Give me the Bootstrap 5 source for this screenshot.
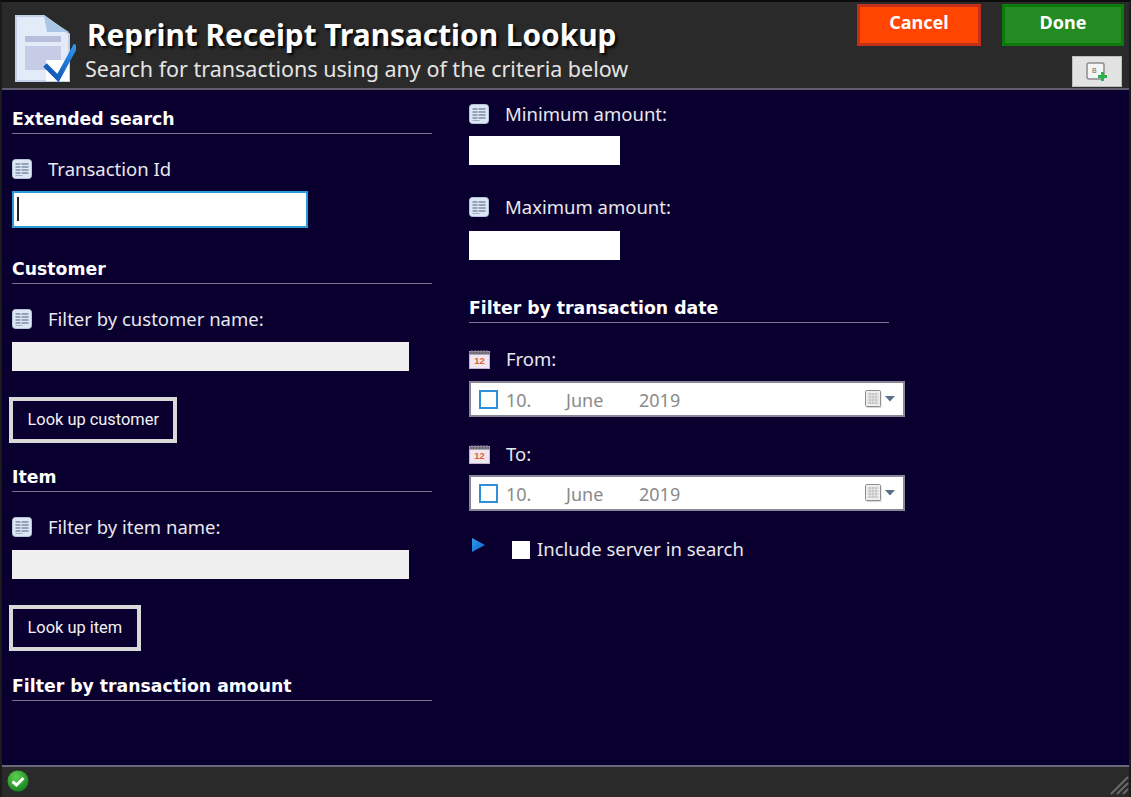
<!DOCTYPE html>
<html lang="en">
<head>
<meta charset="utf-8">
<title>Reprint Receipt Transaction Lookup</title>
<link href="https://cdn.jsdelivr.net/npm/bootstrap@5.3.0/dist/css/bootstrap.min.css" rel="stylesheet">
<style>
html, body { height: 100%; }
body { background: #2a2a2a; color: #fff; font-family: "Noto Sans", "DejaVu Sans", sans-serif; overflow: hidden; }
.shell { width: 1131px; height: 797px; border-top: 2px solid #0c0c0c; border-left: 2px solid #1c1c1c; border-right: 2px solid #1c1c1c; }
.top-bar { height: 88px; background: #2a2a2a; border-bottom: 2px solid #5f5c70; }
.doc-icon { width: 62px; height: 70px; margin: 13px 0 0 12px; flex: none; }
.title-box { margin-left: 11px; padding-top: 15px; }
.title-main { font-size: 29.8px; line-height: 36px; font-weight: 700; text-shadow: 2px 2px 3px #000; white-space: nowrap; }
.title-sub { font-size: 21.5px; line-height: 20px; color: #e4e4e4; white-space: nowrap; margin: 6px 0 0 -2px; }
.top-actions { width: 272px; padding-right: 5px; }
.act-btn { height: 42px; margin-top: 2px; font-size: 18px; font-weight: 700; color: #fff; border: 3px solid; border-radius: 0; padding: 0 0 6px; line-height: 1; }
.act-cancel { width: 124px; background: #ff4500; border-color: #c3301a; }
.act-done { width: 122px; background: #228b22; border-color: #0b7a0b; }
.key-btn { width: 50px; height: 31px; background: #e2e2e2; border: 1px solid #bdbdbd; border-radius: 0; padding: 0; margin: 10px 2px 0 0; }
.work-area { height: 675px; background: #0a0030; }
.col-left { width: 467px; padding: 0 0 0 10px; flex: none; }
.col-right { width: 436px; flex: none; }
.sec-head { font-family: "DejaVu Sans", sans-serif; font-size: 17.3px; line-height: 22px; font-weight: 700; border-bottom: 1px solid #77758a; padding-bottom: 3px; margin: 0; white-space: nowrap; width: 420px; }
.fld-label { font-size: 18.5px; line-height: 22px; color: #e8e8ee; margin: 0; white-space: nowrap; }
.fld-icon { width: 20px; height: 20px; flex: none; }
.cal-icon { width: 21px; height: 20px; flex: none; }
.txt-box { display: block; background: #fff; border: 0; border-radius: 0; padding: 0; height: 29px; }
.box-id { width: 296px; height: 37px; border: 2px solid #2b9bd6; margin-top: 11px; position: relative; }
.box-id::before { content: ""; position: absolute; left: 3px; top: 4px; bottom: 5px; width: 2px; background: #222; }
.box-wide { width: 397px; background: #efefef; margin-top: 12px; }
.box-amt { width: 151px; margin-top: 11px; }
.box-amt2 { margin-top: 13px; }
.outline-btn { display: block; height: 46px; margin: 26px 0 0 -3px; background: transparent; border: 4px solid #d9d9d9; border-radius: 0; color: #f2f2f2; font-family: "Roboto", "Liberation Sans", sans-serif; font-size: 16.4px; padding: 0 14.5px; }
.date-box { width: 436px; height: 36px; background: #fff; border: 2px solid #8a8898; margin-top: 11px; color: #8a8a8a; font-size: 18px; padding: 0 8px; }
.date-box2 { margin-top: 10px; }
.date-check { width: 19px; height: 19px; border: 2px solid #2f8fd8; flex: none; margin-right: 8px; }
.date-day { width: 60px; }
.date-month { width: 73px; }
.date-txt { padding-top: 2px; }
.inc-check { width: 18px; height: 18px; background: #fff; flex: none; margin: 4px 7px 0 26px; }
.inc-tri { width: 15px; height: 16px; flex: none; margin: -6px 0 0 2px; }
.bottom-bar { height: 30px; border-top: 2px solid #6a687a; background: #2a2a2a; padding-left: 5px; }
.grip { width: 22px; height: 22px; margin-top: auto; }
</style>
</head>
<body>
<svg width="0" height="0" class="position-absolute">
  <defs>
    <linearGradient id="chk-grad" x1="0" y1="1" x2="1" y2="0">
      <stop offset="0" stop-color="#0f4fb0"/><stop offset="1" stop-color="#2f96ee"/>
    </linearGradient>
    <radialGradient id="ok-grad" cx=".4" cy=".3" r=".8">
      <stop offset="0" stop-color="#5ed04f"/><stop offset="1" stop-color="#0e7a1c"/>
    </radialGradient>
    <linearGradient id="tri-grad" x1="0" y1="0" x2="1" y2="1">
      <stop offset="0" stop-color="#2f9cf0"/><stop offset="1" stop-color="#0f5fc4"/>
    </linearGradient>
    <symbol id="list-ico" viewBox="0 0 20 20">
      <rect x="0.5" y="0.5" width="19" height="19" rx="3" fill="#dde7f3" stroke="#b6c6da"/>
      <path d="M3.5 5h13M3.5 8h13M3.5 11h13M3.5 14h13" stroke="#7b8ea8" stroke-width="1.3"/>
      <path d="M9 4v11" stroke="#dde7f3" stroke-width="1"/>
      <path d="M3.5 16.5h7" stroke="#9fb0c6" stroke-width="1"/>
    </symbol>
    <symbol id="cal-ico" viewBox="0 0 21 20">
      <rect x="0.5" y="2.5" width="20" height="17" fill="#efe6f2" stroke="#bdb6c8"/>
      <rect x="0.5" y="2.5" width="20" height="3" fill="#6a6470"/>
      <path d="M3 1v4M6 1v4M9 1v4M12 1v4M15 1v4M18 1v4" stroke="#8d8894" stroke-width="1"/>
      <text x="10.5" y="15" text-anchor="middle" font-size="9.5" font-weight="700" fill="#e8602c" font-family="Liberation Sans">12</text>
    </symbol>
    <symbol id="pick-ico" viewBox="0 0 30 18">
      <rect x="1.5" y="2" width="15" height="16" fill="#8f8f8f" opacity=".35"/>
      <rect x="0.5" y="0.5" width="15" height="16" rx="1" fill="#eee" stroke="#8e8e8e"/>
      <path d="M2.5 4h11M2.5 7h11M2.5 10h11M2.5 13h11M5 3v11M8 3v11M11 3v11" stroke="#b4b4b4" stroke-width=".8"/>
      <path d="M20 6h10l-5 5.5z" fill="#5c6f8a"/>
    </symbol>
  </defs>
</svg>
<div class="shell d-flex flex-column">
  <div class="top-bar d-flex">
    <svg class="doc-icon" viewBox="0 0 62 70">
      <path d="M2 1h28l25 18v47H2z" fill="#e4ebf8" stroke="#c4cfe8" stroke-width="2"/>
      <path d="M30 1l3 16h22z" fill="#a9c6e6"/>
      <rect x="11" y="21" width="36" height="6" fill="#b7bfdd"/>
      <rect x="11" y="31" width="36" height="24" fill="#c6cce6"/>
      <rect x="32" y="45" width="23" height="21" fill="#fff"/>
      <path d="M31 50l13 13 18-33" fill="none" stroke="url(#chk-grad)" stroke-width="5"/>
    </svg>
    <div class="title-box flex-grow-1">
      <div class="title-main">Reprint Receipt Transaction Lookup</div>
      <div class="title-sub">Search for transactions using any of the criteria below</div>
    </div>
    <div class="top-actions d-flex flex-column align-items-end flex-none">
      <div class="d-flex w-100 justify-content-between">
        <button class="btn act-btn act-cancel">Cancel</button>
        <button class="btn act-btn act-done">Done</button>
      </div>
      <button class="btn key-btn d-flex align-items-center justify-content-center">
        <svg width="24" height="22" viewBox="0 0 24 22">
          <rect x="2" y="2" width="17" height="16" rx="2" fill="#f4f4f4" stroke="#8c8c8c" stroke-width="1.5"/>
          <text x="7" y="12" font-size="7" fill="#666" font-family="Liberation Sans">B</text>
          <path d="M16 11h3v3h3v3h-3v3h-3v-3h-3v-3h3z" fill="#2cb24a"/>
        </svg>
      </button>
    </div>
  </div>

  <div class="work-area d-flex">
    <div class="col-left">
      <h2 class="sec-head" style="margin-top:18px">Extended search</h2>
      <div class="d-flex align-items-center gap-3 mt-4"><svg class="fld-icon"><use href="#list-ico"/></svg><p class="fld-label">Transaction Id</p></div>
      <div class="txt-box box-id"></div>
      <h2 class="sec-head" style="margin-top:30px">Customer</h2>
      <div class="d-flex align-items-center gap-3 mt-4"><svg class="fld-icon"><use href="#list-ico"/></svg><p class="fld-label">Filter by customer name:</p></div>
      <div class="txt-box box-wide"></div>
      <button class="outline-btn">Look up customer</button>
      <h2 class="sec-head" style="margin-top:23px">Item</h2>
      <div class="d-flex align-items-center gap-3 mt-4"><svg class="fld-icon"><use href="#list-ico"/></svg><p class="fld-label">Filter by item name:</p></div>
      <div class="txt-box box-wide"></div>
      <button class="outline-btn">Look up item</button>
      <h2 class="sec-head" style="margin-top:24px">Filter by transaction amount</h2>
    </div>
    <div class="col-right">
      <div class="d-flex align-items-center gap-3" style="margin-top:13px"><svg class="fld-icon"><use href="#list-ico"/></svg><p class="fld-label">Minimum amount:</p></div>
      <div class="txt-box box-amt"></div>
      <div class="d-flex align-items-center gap-3" style="margin-top:31px"><svg class="fld-icon"><use href="#list-ico"/></svg><p class="fld-label">Maximum amount:</p></div>
      <div class="txt-box box-amt box-amt2"></div>
      <h2 class="sec-head" style="margin-top:37px">Filter by transaction date</h2>
      <div class="d-flex align-items-center gap-3" style="margin-top:25px"><svg class="cal-icon"><use href="#cal-ico"/></svg><p class="fld-label">From:</p></div>
      <div class="date-box d-flex align-items-center">
        <span class="date-check"></span><span class="date-day date-txt">10.</span><span class="date-month date-txt">June</span><span class="flex-grow-1 date-txt">2019</span>
        <svg width="30" height="18"><use href="#pick-ico"/></svg>
      </div>
      <div class="d-flex align-items-center gap-3" style="margin-top:26px"><svg class="cal-icon"><use href="#cal-ico"/></svg><p class="fld-label">To:</p></div>
      <div class="date-box date-box2 d-flex align-items-center">
        <span class="date-check"></span><span class="date-day date-txt">10.</span><span class="date-month date-txt">June</span><span class="flex-grow-1 date-txt">2019</span>
        <svg width="30" height="18"><use href="#pick-ico"/></svg>
      </div>
      <div class="d-flex align-items-center" style="margin-top:25px">
        <svg class="inc-tri" viewBox="0 0 15 16"><path d="M1 1l13 7-13 7z" fill="url(#tri-grad)"/></svg>
        <span class="inc-check"></span>
        <span class="fld-label" style="margin-top:2px">Include server in search</span>
      </div>
    </div>
  </div>

  <div class="bottom-bar d-flex justify-content-between align-items-center">
    <svg width="22" height="22" viewBox="0 0 22 22">
      <circle cx="11" cy="11" r="10.5" fill="url(#ok-grad)"/>
      <path d="M5.5 11.5l4 3.5L16.5 8" fill="none" stroke="#fff" stroke-width="3"/>
    </svg>
    <svg class="grip" viewBox="0 0 22 22"><path d="M4 21L21 4M10 21L21 10M16 21l5-5" stroke="#6a6a6a" stroke-width="2"/></svg>
  </div>
</div>
<script src="https://cdn.jsdelivr.net/npm/bootstrap@5.3.0/dist/js/bootstrap.bundle.min.js"></script>
</body>
</html>
